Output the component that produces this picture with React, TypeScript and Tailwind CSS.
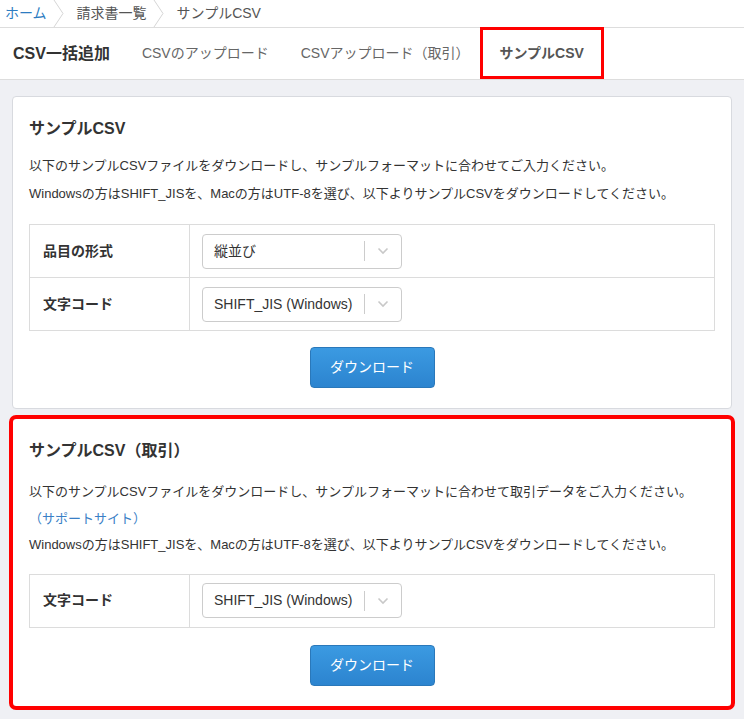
import React from 'react';

const font = { fontFamily: '"Liberation Sans", "Noto Sans CJK JP", sans-serif' };

const Crumb = () => (
  <svg width="12" height="27" viewBox="0 0 12 27" className="mx-[6px] shrink-0">
    <polyline points="1,0 10,13.5 1,27" fill="none" stroke="#d6d6d6" strokeWidth="1" />
  </svg>
);

const Chevron = () => (
  <svg width="12" height="8" viewBox="0 0 12 8">
    <polyline points="1.5,1.5 6,6 10.5,1.5" fill="none" stroke="#c8c8c8" strokeWidth="1.6" />
  </svg>
);

const SelectBox = ({ value }: { value: string }) => (
  <div className="flex h-[35px] w-[200px] items-center rounded-[4px] border border-[#cccccc] bg-white">
    <span className="flex-1 overflow-hidden whitespace-nowrap pl-[11px] text-[14px] text-[#333]">{value}</span>
    <span className="h-[20px] w-px bg-[#cccccc]" />
    <span className="flex w-[36px] justify-center">
      <Chevron />
    </span>
  </div>
);

const Row = ({ label, value, last }: { label: string; value: string; last?: boolean }) => (
  <div className={last ? 'flex h-[52px]' : 'flex h-[53px] border-b border-[#dcdcdc]'}>
    <div className="flex w-[160px] shrink-0 items-center border-r border-[#dcdcdc] pl-[13px] text-[14px] font-bold text-[#333]">
      {label}
    </div>
    <div className="flex items-center pl-[12px]">
      <SelectBox value={value} />
    </div>
  </div>
);

const DownloadButton = () => (
  <div className="flex justify-center">
    <button className="h-[41px] w-[125px] rounded-[4px] border border-[#2a78ba] bg-gradient-to-b from-[#3b9ae2] to-[#2c84cf] text-[14px] text-white">
      ダウンロード
    </button>
  </div>
);

export default function App() {
  return (
    <div className="min-h-[719px] bg-[#eff0f4] text-[#333]" style={font}>
      {/* breadcrumb */}
      <div className="flex h-[28px] items-center border-b border-[#dddddd] bg-white pl-[5px] text-[14px]">
        <span className="text-[#2d7cc1]">ホーム</span>
        <Crumb />
        <span className="ml-[6px] text-[#555]">請求書一覧</span>
        <Crumb />
        <span className="ml-[6px] text-[#555]">サンプルCSV</span>
      </div>

      {/* tabs */}
      <div className="flex h-[52px] items-stretch border-b border-[#dddddd] bg-white">
        <div className="flex items-center pl-[13px] pr-[16px] text-[16px] font-bold text-[#333]">CSV一括追加</div>
        <div className="flex items-center px-[16px] text-[14px] text-[#666]">CSVのアップロード</div>
        <div className="flex items-center px-[16px] text-[14px] text-[#666]">CSVアップロード（取引）</div>
        <div className="ml-[-6px] -mt-[1px] flex items-center border-[3px] border-[#ff0000] px-[17px] text-[14px] font-bold text-[#555]">
          サンプルCSV
        </div>
      </div>

      <div className="px-[12px] pt-[16px] pb-[10px]">
        {/* card 1 */}
        <div className="rounded-[4px] border border-[#d8dadf] bg-white px-[16px] pt-[19px] pb-[20px]">
          <h2 className="text-[16px] font-bold leading-[26px]">サンプルCSV</h2>
          <div className="mt-[10px] text-[13px] leading-[28px] text-[#333]">
            <p>以下のサンプルCSVファイルをダウンロードし、サンプルフォーマットに合わせてご入力ください。</p>
            <p>Windowsの方はSHIFT_JISを、Macの方はUTF-8を選び、以下よりサンプルCSVをダウンロードしてください。</p>
          </div>
          <div className="mt-[16px] border border-[#dcdcdc]">
            <Row label="品目の形式" value="縦並び" />
            <Row label="文字コード" value="SHIFT_JIS (Windows)" last />
          </div>
          <div className="mt-[16px]">
            <DownloadButton />
          </div>
        </div>

        {/* card 2 */}
        <div className="mt-[9px] rounded-[4px] border border-[#d8dadf] bg-white px-[16px] pt-[19px] pb-[20px] outline-[4px] outline-offset-[-1px] outline-[#ff0000] outline">
          <h2 className="text-[16px] font-bold leading-[26px]">サンプルCSV（取引）</h2>
          <div className="mt-[15px] text-[13px] leading-[26.5px] text-[#333]">
            <p>以下のサンプルCSVファイルをダウンロードし、サンプルフォーマットに合わせて取引データをご入力ください。</p>
            <p className="text-[#3a7fc6]">（サポートサイト）</p>
            <p>Windowsの方はSHIFT_JISを、Macの方はUTF-8を選び、以下よりサンプルCSVをダウンロードしてください。</p>
          </div>
          <div className="mt-[15px] border border-[#dcdcdc]">
            <Row label="文字コード" value="SHIFT_JIS (Windows)" last />
          </div>
          <div className="mt-[17px]">
            <DownloadButton />
          </div>
        </div>
      </div>
    </div>
  );
}
